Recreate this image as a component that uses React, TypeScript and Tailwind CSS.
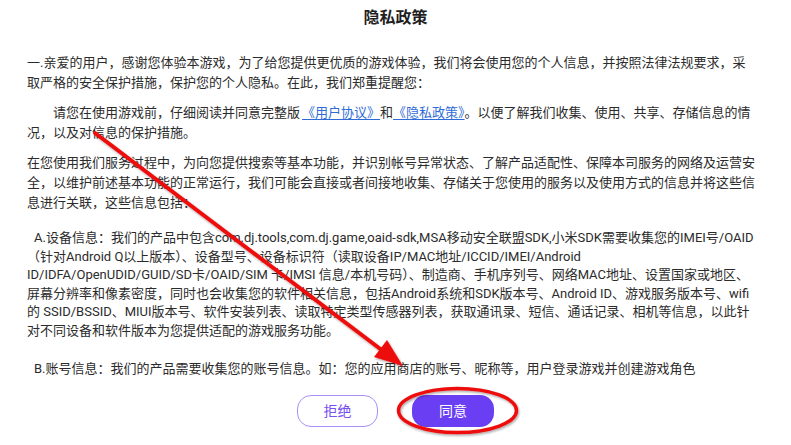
export default function App() {
    const linkCls = "text-[#2f6bd8] underline underline-offset-2";

    const deviceLines = [
        "A.设备信息：我们的产品中包含com.dj.tools,com.dj.game,oaid-sdk,MSA移动安全联盟SDK,小米SDK需要收集您的IMEI号/OAID",
        "（针对Android Q以上版本）、设备型号、设备标识符（读取设备IP/MAC地址/ICCID/IMEI/Android",
        "ID/IDFA/OpenUDID/GUID/SD卡/OAID/SIM 卡/IMSI 信息/本机号码）、制造商、手机序列号、网络MAC地址、设置国家或地区、",
        "屏幕分辨率和像素密度，同时也会收集您的软件相关信息，包括Android系统和SDK版本号、Android ID、游戏服务版本号、wifi",
        "的 SSID/BSSID、MIUI版本号、软件安装列表、读取特定类型传感器列表，获取通讯录、短信、通话记录、相机等信息，以此针",
        "对不同设备和软件版本为您提供适配的游戏服务功能。",
    ];

    return (
        <div className="relative w-[791px] h-[445px] bg-white overflow-hidden text-[#2b2b2b] font-['Roboto','Noto_Sans_CJK_SC',sans-serif]">
            <h1 className="pt-[7px] text-center text-[16px] leading-[22px] font-bold text-[#1f1f1f]">隐私政策</h1>

            <div className="pl-[27px] pr-[33.5px] h-[350px] overflow-hidden text-[13px]">
                <p className="mt-[24px] leading-[20px]">
                    一.亲爱的用户，感谢您体验本游戏，为了给您提供更优质的游戏体验，我们将会使用您的个人信息，并按照法律法规要求，采取严格的安全保护措施，保护您的个人隐私。在此，我们郑重提醒您：
                </p>
                <p className="mt-[10px] leading-[20px] indent-[26px]">
                    请您在使用游戏前，仔细阅读并同意完整版<a className={`${linkCls} ml-[2px]`}>《用户协议》</a>和<a className={linkCls}>《隐私政策》</a>。以便了解我们收集、使用、共享、存储信息的情况，以及对信息的保护措施。
                </p>
                <p className="mt-[10px] leading-[20px]">
                    在您使用我们服务过程中，为向您提供搜索等基本功能，并识别帐号异常状态、了解产品适配性、保障本司服务的网络及运营安全，以维护前述基本功能的正常运行，我们可能会直接或者间接地收集、存储关于您使用的服务以及使用方式的信息并将这些信息进行关联，这些信息包括：
                </p>
                <p className="mt-[16px] leading-[18.5px] indent-[7px] whitespace-nowrap">
                    {deviceLines.map((line, i) => (
                        <span key={i}>
                            {line}
                            {i < deviceLines.length - 1 && <br />}
                        </span>
                    ))}
                </p>
                <p className="mt-[20px] leading-[18.5px] indent-[7px]">
                    B.账号信息：我们的产品需要收集您的账号信息。如：您的应用商店的账号、昵称等，用户登录游戏并创建游戏角色
                </p>
            </div>

            <div className="flex justify-center gap-[34px] mt-[16px]">
                <button className="w-[81px] h-[32px] rounded-[14px] border border-[#a98ff7] text-[14px] text-[#7650f0] bg-white">拒绝</button>
                <button className="w-[82px] h-[32px] rounded-[14px] bg-[#6a3ef2] text-[14px] text-white">同意</button>
            </div>

            {/* annotation drawn over the screenshot */}
            <svg className="absolute inset-0 pointer-events-none" width="791" height="445">
                <defs>
                    <filter id="sh" x="-10%" y="-10%" width="120%" height="120%">
                        <feDropShadow dx="1" dy="1.5" stdDeviation="1.2" floodColor="#000" floodOpacity="0.35" />
                    </filter>
                </defs>
                <g filter="url(#sh)">
                    <line x1="95" y1="133" x2="383" y2="351" stroke="#ee1111" strokeWidth="4" strokeLinecap="round" />
                    <polygon points="403,366 374,357 387,340" fill="#ee1111" />
                    <ellipse cx="457.5" cy="410.5" rx="59" ry="22" fill="none" stroke="#ee1111" strokeWidth="3.5" />
                </g>
            </svg>
        </div>
    );
}
